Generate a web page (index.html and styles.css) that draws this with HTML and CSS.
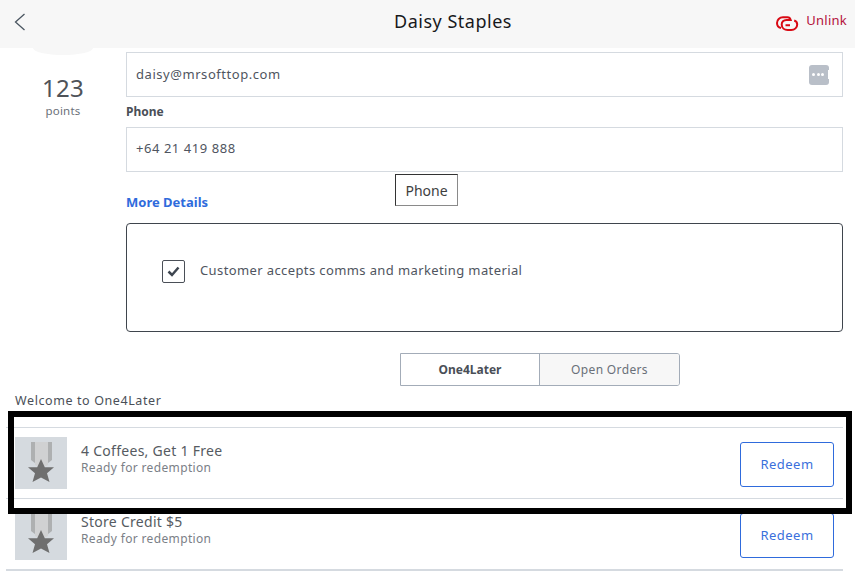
FILE: index.html
```html
<!DOCTYPE html>
<html lang="en">
<head>
<meta charset="utf-8">
<title>Daisy Staples</title>
<link rel="stylesheet" href="styles.css">
</head>
<body>
<header class="topbar">
  <button class="back" aria-label="Back">
    <svg width="12" height="18" viewBox="0 0 12 18"><path d="M10.5 1 1.5 9l9 8" fill="none" stroke="#4a5560" stroke-width="1.3"/></svg>
  </button>
  <h1 class="title">Daisy Staples</h1>
  <a class="unlink">
    <svg width="23" height="17" viewBox="0 0 23 17"><path d="M5 13C2.500 12.500 1 10.300 1 8 1 4.700 3.500 2.300 7 2.300h4.500c1.500 0 2.700 1 3.200 2.700H10.500C7.500 5 5.700 7 5.700 9.500c0 3.300 2.700 5.500 6 5.500h3.500c3.500 0 6-2.500 6-5.500 0-2-1.300-3.500-3-4M9.500 10.200H14" fill="none" stroke="#d90a14" stroke-width="2"/></svg>
    <span>Unlink</span>
  </a>
</header>
<div class="avatar-edge"></div>
<main class="page">
  <section class="profile">
    <aside class="points">
      <div class="points-value">123</div>
      <div class="points-label">points</div>
    </aside>
    <div class="form">
      <div class="field field-email">
        <span class="field-text-email">daisy@mrsofttop.com</span>
        <span class="keychip"><i></i><i></i><i></i><b></b></span>
      </div>
      <label class="field-label">Phone</label>
      <div class="field"><span class="field-text">+64 21 419 888</span></div>
      <a class="more">More Details</a>
      <div class="consent">
        <span class="check">
          <svg width="13" height="11" viewBox="0 0 13 11"><path d="M1.500 5.500 5 9 11.500 1.500" fill="none" stroke="#3e4650" stroke-width="2.500"/></svg>
        </span>
        <span class="consent-text">Customer accepts comms and marketing material</span>
      </div>
      <div class="tabs">
        <div class="tab tab-active">One4Later</div>
        <div class="tab">Open Orders</div>
      </div>
    </div>
  </section>
  <div class="welcome">Welcome to One4Later</div>
  <ul class="rewards">
    <li class="reward">
      <span class="thumb">
        <svg width="52" height="52" viewBox="0 0 52 52"><path d="M16 5h21v18l-10.500 8L16 23z" fill="#aeb0b1"/><path d="M20 5h13v23l-6.500 3-6.500-3z" fill="#d0d1d2"/><path d="m26 22 3.800 8.200H39l-7 6L34.500 45 26 40.500 17.500 45 20 36.200l-7-6h9.200z" fill="#6f6f6f"/></svg>
      </span>
      <div class="reward-text">
        <div class="reward-name">4 Coffees, Get 1 Free</div>
        <div class="reward-status">Ready for redemption</div>
      </div>
      <button class="redeem">Redeem</button>
    </li>
    <li class="reward">
      <span class="thumb">
        <svg width="52" height="52" viewBox="0 0 52 52"><path d="M16 5h21v18l-10.500 8L16 23z" fill="#aeb0b1"/><path d="M20 5h13v23l-6.500 3-6.500-3z" fill="#d0d1d2"/><path d="m26 22 3.800 8.200H39l-7 6L34.500 45 26 40.500 17.500 45 20 36.200l-7-6h9.200z" fill="#6f6f6f"/></svg>
      </span>
      <div class="reward-text">
        <div class="reward-name">Store Credit $5</div>
        <div class="reward-status">Ready for redemption</div>
      </div>
      <button class="redeem">Redeem</button>
    </li>
  </ul>
</main>
<div class="tooltip">Phone</div>
<div class="highlight"></div>
</body>
</html>
```
FILE: styles.css
```css
* { box-sizing: border-box; }
html, body { margin: 0; height: 100%; }
body {
  position: relative;
  width: 855px;
  height: 574px;
  overflow: hidden;
  background: #fff;
  color: #4a4f57;
  font-family: "Noto Sans", "Liberation Sans", sans-serif;
  font-size: 13px;
}
.topbar {
  height: 48px;
  background: #f7f7f7;
  display: grid;
  grid-template-columns: 1fr auto 1fr;
  align-items: center;
  padding: 0 8px 4px 14px;
}
.back { border: 0; background: none; padding: 0; width: 12px; height: 18px; display: block; }
.title { margin: 0 0 2px 45px; font-size: 18px; font-weight: 400; color: #17191c; line-height: 24px; letter-spacing: 0.5px; }
.unlink { justify-self: end; display: flex; align-items: flex-start; gap: 7px; color: #b4123c; font-size: 13px; letter-spacing: 0.25px; }
.unlink svg { margin-top: 3px; }
.unlink span { line-height: 18px; margin-top: -1px; }
.avatar-edge {
  position: absolute; left: 33px; top: 48px; width: 60px; height: 7px;
  background: #f7f7f7; border-radius: 0 0 50% 50% / 0 0 100% 100%;
}
.page { padding: 4px 12px 0 6px; }
.profile { display: flex; }
.points { width: 120px; padding-top: 22px; padding-right: 6px; text-align: center; }
.points-value { font-size: 24px; line-height: 28px; color: #4f5359; letter-spacing: 0.3px; }
.points-label { font-size: 11.500px; line-height: 18px; color: #6b7079; letter-spacing: 0.2px; }
.form { flex: 1; min-width: 0; }
.field {
  height: 45px; border: 1px solid #d5dae0; padding: 0 13px 0 9px;
  display: flex; align-items: center; justify-content: space-between;
  font-size: 13px; letter-spacing: 0.55px; color: #4f5560;
}
.field-text { margin-bottom: 3px; }
.field-text-email { margin-bottom: 1px; }
.field-label { display: block; height: 30px; padding-top: 7px; font-size: 12px; line-height: 16px; font-weight: 700; color: #4a4f57; }
.keychip {
  width: 20px; height: 20px; border-radius: 3px; background: #b9bfc8;
  display: flex; align-items: center; gap: 1.500px; padding-left: 3px;
}
.keychip i { width: 3px; height: 3px; border-radius: 50%; background: #fff; }
.keychip b { width: 1px; height: 9px; background: #fff; margin-left: 2px; }
.more { display: block; margin-top: 21px; height: 20px; font-size: 13px; line-height: 18px; font-weight: 700; color: #2f6bdc; }
.consent {
  margin-top: 10px; height: 109px; border: 1px solid #3f454d; border-radius: 4px;
  padding: 0 35px 13px; display: flex; align-items: center; gap: 15px;
  font-size: 13px; letter-spacing: 0.39px; color: #4f5560;
}
.consent-text { margin-bottom: 2px; }
.check {
  width: 23px; height: 23px; border: 1px solid #4a4f57; border-radius: 2px;
  display: flex; align-items: center; justify-content: center; flex: none;
}
.tabs {
  margin: 21px 0 0 274px; width: 280px; height: 33px; display: flex;
  border: 1px solid #a3acb8; border-radius: 0 3px 3px 0; overflow: hidden;
}
.tab {
  background: #f7f7f7; flex: 1; display: flex; align-items: center; justify-content: center;
  font-size: 12px; letter-spacing: 0.35px; color: #6a7079;
}
.tab-active { flex: none; width: 139px; background: #fff; font-weight: 700; color: #4a4f57; border-right: 1px solid #a3acb8; letter-spacing: 0; }
.welcome { margin: 7px 0 0 9px; height: 34px; font-size: 12.500px; line-height: 16px; letter-spacing: 0.6px; color: #4a4f57; }
.rewards { list-style: none; margin: 0; padding: 0; border-top: 1px solid #d5dae0; }
.reward {
  height: 71px; padding: 9px; display: flex; align-items: center; gap: 14px;
  border-bottom: 1px solid #d5dae0;
}
.reward:last-child { height: 72px; border-bottom-width: 2px; }
.thumb { width: 52px; height: 52px; flex: none; background: #d5dadf; display: block; }
.thumb svg { display: block; }
.reward-text { flex: 1; min-width: 0; padding-bottom: 10px; }
.reward-name { font-size: 14px; line-height: 18px; letter-spacing: 0.28px; color: #565b62; }
.reward-status { font-size: 12px; line-height: 15px; letter-spacing: 0.35px; color: #7b8087; }
.redeem {
  width: 94px; height: 45px; margin-top: 3px; padding: 0 0 2px; background: #fff; border: 1px solid #2f6bdc; border-radius: 3px;
  font: inherit; font-size: 13px; letter-spacing: 0.5px; color: #3a6fdc;
}
.tooltip {
  position: absolute; left: 395px; top: 174px; width: 63px; height: 32px;
  border: 1px solid #8a8a8a; border-top-color: #333; border-left-color: #333;
  background: #fff; display: flex; align-items: center; justify-content: center;
  font-size: 14px; color: #3e3e3e;
}
.highlight {
  position: absolute; left: 8px; top: 411px; width: 844px; height: 103px;
  border: 6px solid #000; pointer-events: none;
}
```
